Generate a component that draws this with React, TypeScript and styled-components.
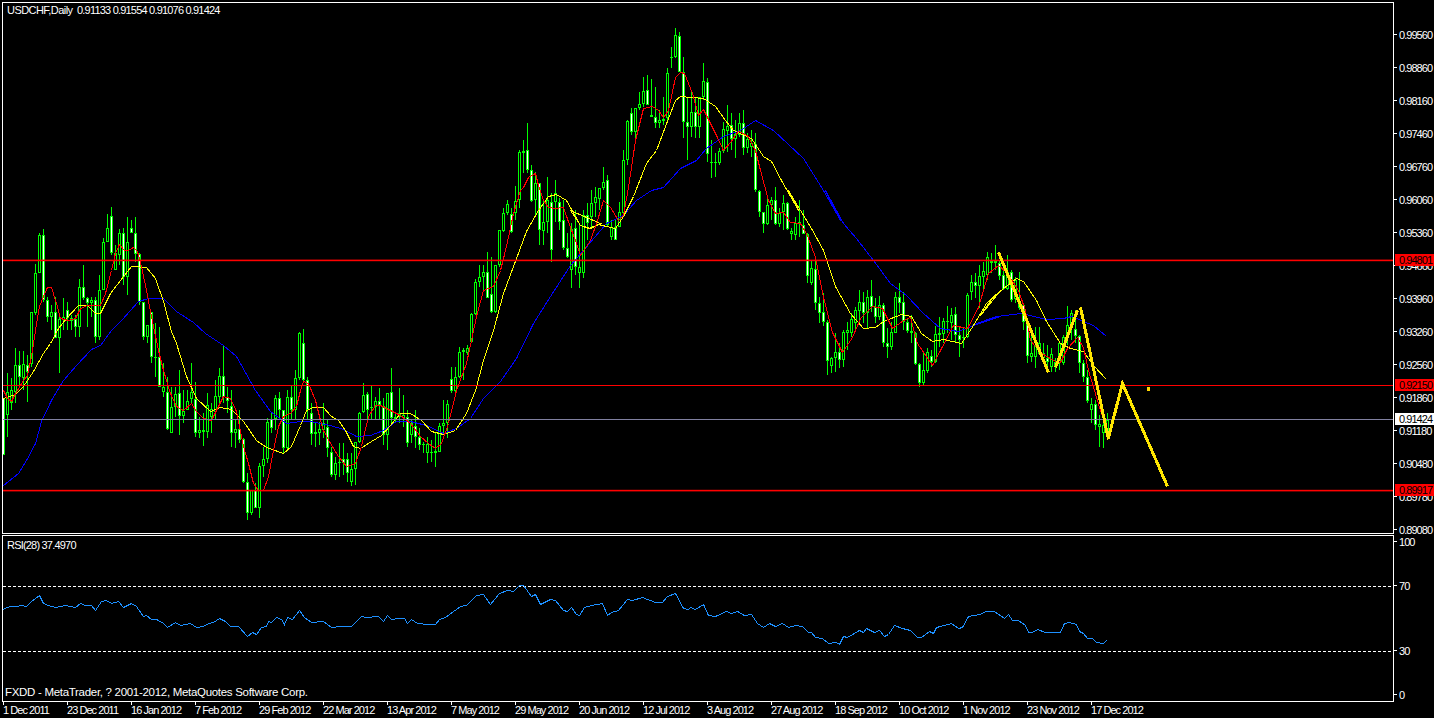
import * as React from 'react';
import styled, { createGlobalStyle } from 'styled-components';

type Bar = [number, number, number, number, number];
type Pt = [number, number];

// bars traced off 3x crops: [wick top, body top, body bottom, wick bottom, bull]
// values are crop y, so real y = base + v / 3
const barGroups: { base: number; rows: Bar[] }[] = [
  {
    base: 190,
    rows: [
      [625, 625, 795, 795, 0], [550, 605, 675, 740, 1], [565, 600, 640, 660, 1], [475, 525, 605, 640, 1],
      [483, 525, 560, 590, 0], [483, 522, 565, 600, 1], [495, 525, 545, 635, 0], [365, 367, 522, 530, 1],
      [222, 250, 370, 375, 1], [130, 135, 250, 250, 1], [118, 135, 330, 335, 0], [320, 330, 380, 395, 0],
      [345, 365, 380, 420, 1], [320, 365, 445, 445, 0], [370, 388, 445, 548, 1], [325, 380, 390, 420, 1],
      [335, 360, 385, 420, 0], [375, 385, 392, 420, 1], [375, 388, 412, 440, 0], [268, 290, 412, 440, 1],
      [225, 290, 325, 330, 0], [320, 325, 340, 410, 0], [320, 330, 340, 380, 1], [320, 330, 442, 460, 0],
      [255, 300, 442, 450, 1], [145, 155, 300, 300, 1], [72, 115, 155, 155, 1], [52, 78, 190, 195, 0],
      [165, 190, 240, 240, 1], [118, 130, 195, 225, 1], [115, 130, 262, 285, 0], [80, 155, 262, 315, 1],
      [90, 115, 128, 130, 0], [80, 128, 192, 215, 0], [190, 192, 335, 345, 0], [335, 335, 440, 450, 0],
      [405, 405, 440, 458, 1], [365, 365, 500, 520, 0], [400, 500, 505, 560, 1], [410, 500, 590, 590, 0],
      [520, 590, 605, 620, 1], [560, 605, 718, 720, 0], [590, 652, 728, 730, 1], [590, 612, 652, 680, 1],
      [540, 610, 678, 735, 0], [600, 662, 678, 700, 1], [600, 632, 660, 660, 1], [520, 605, 628, 640, 1],
      [575, 628, 728, 740, 0], [680, 720, 728, 745, 1], [670, 720, 725, 768, 1], [610, 645, 725, 745, 1],
      [640, 658, 682, 730, 1], [570, 618, 665, 690, 1], [535, 558, 620, 645, 1], [468, 558, 620, 640, 0],
      [590, 620, 632, 670, 0], [600, 648, 728, 770, 0], [690, 718, 728, 775, 1], [660, 718, 750, 760, 0],
      [745, 748, 875, 880, 0], [850, 875, 968, 990, 0], [900, 900, 968, 975, 1], [880, 900, 955, 955, 0],
      [820, 828, 955, 985, 1], [770, 808, 828, 860, 1], [685, 697, 808, 820, 1], [670, 688, 715, 730, 0],
      [615, 625, 688, 720, 1], [605, 625, 660, 690, 0], [660, 660, 775, 790, 0], [600, 620, 775, 782, 1],
      [585, 620, 660, 690, 0], [540, 565, 660, 690, 1], [425, 430, 565, 570, 1],
      // next crop starts here
      [418, 460, 570, 580, 0], [560, 570, 660, 690, 0], [640, 670, 732, 765, 0], [700, 725, 732, 770, 1],
      [695, 718, 728, 765, 1], [640, 700, 720, 745, 1], [690, 712, 775, 800, 0], [770, 785, 855, 860, 0],
      [800, 818, 855, 870, 1], [760, 815, 820, 860, 1], [760, 808, 820, 855, 0], [790, 808, 850, 875, 0],
      [790, 838, 875, 888, 1], [755, 755, 838, 885, 1], [665, 668, 755, 760, 1], [578, 615, 665, 668, 1],
      [605, 612, 660, 690, 0], [585, 650, 655, 690, 1], [620, 632, 650, 690, 1], [595, 632, 645, 690, 0],
      [625, 648, 735, 765, 0], [630, 610, 735, 780, 1], [535, 607, 685, 700, 0], [665, 680, 688, 700, 1],
      [595, 668, 680, 700, 1], [615, 675, 685, 710, 1], [660, 680, 760, 770, 0], [690, 700, 735, 760, 1],
      [660, 708, 742, 775, 0], [715, 742, 765, 780, 0], [755, 762, 765, 790, 1], [740, 762, 788, 818, 1],
      [750, 785, 788, 815, 1], [730, 782, 788, 832, 1], [700, 707, 785, 785, 1], [630, 700, 707, 735, 1],
      [630, 642, 700, 745, 1], [530, 568, 602, 610, 0], [530, 560, 602, 610, 1], [470, 485, 560, 565, 1],
      [475, 480, 487, 570, 1], [465, 475, 488, 495, 1], [370, 372, 455, 460, 1], [268, 277, 372, 375, 1],
      [225, 262, 277, 290, 1], [225, 245, 262, 300, 1], [185, 245, 325, 325, 0], [200, 312, 365, 370, 0],
      [225, 225, 365, 370, 1], [120, 120, 225, 230, 1], [55, 70, 122, 125, 1], [30, 42, 68, 75, 1],
      [55, 72, 125, 130, 0],
      // top of this stretch is cut from another crop, hence the negatives
      [-12, 33, 70, 90, 1], [-120, -114, 30, 54, 1], [-150, -117, -111, -51, 1], [-201, -120, -60, -51, 0],
      [-75, -60, 33, 36, 0], [-54, -21, 30, 75, 1], [-21, -21, 120, 165, 0], [30, 95, 122, 165, 1],
      [-39, 30, 95, 130, 1], [9, 35, 180, 215, 0], [-30, 10, 35, 95, 1], [25, 35, 95, 120, 0],
      [30, 90, 175, 180, 0], [130, 175, 200, 205, 0], [100, 118, 240, 295, 1], [60, 115, 230, 255, 0],
      [100, 230, 250, 295, 1], [60, 75, 250, 265, 1], [40, 75, 100, 150, 0], [0, 38, 82, 110, 1],
      [-10, 20, 38, 80, 1],
    ],
  },
  {
    base: 20,
    rows: [
      [505, 505, 538, 570, 1], [440, 485, 505, 510, 1], [465, 480, 615, 620, 0], [600, 620, 650, 660, 1],
      [600, 620, 660, 660, 0], [545, 575, 620, 620, 1], [390, 420, 578, 580, 1], [300, 302, 420, 435, 1],
      [265, 278, 335, 345, 0], [265, 265, 335, 360, 1], [215, 252, 265, 270, 1], [170, 212, 252, 260, 1],
      [165, 210, 255, 255, 0], [178, 285, 290, 290, 1], [200, 290, 310, 325, 0], [270, 300, 310, 325, 1],
      [230, 298, 302, 315, 1], [145, 158, 295, 300, 1], [80, 112, 115, 145, 1], [25, 45, 112, 115, 1],
      [35, 48, 155, 155, 0], [110, 155, 305, 355, 0], [230, 305, 320, 420, 0], [210, 275, 320, 350, 1],
      [230, 275, 322, 355, 0], [230, 232, 322, 355, 1], [130, 182, 232, 240, 1], [175, 185, 402, 425, 0],
      [360, 425, 428, 475, 1], [400, 425, 430, 470, 1], [385, 392, 428, 435, 1], [305, 328, 392, 400, 1],
      [255, 318, 332, 395, 1], [280, 315, 358, 390, 0], [300, 342, 358, 415, 1], [280, 310, 345, 350, 1],
      [270, 310, 385, 405, 0], [340, 358, 385, 400, 1], [330, 370, 382, 410, 1], [340, 372, 510, 515, 0],
      [510, 512, 575, 590, 0], [575, 575, 612, 640, 0], [530, 555, 612, 615, 1], [530, 540, 555, 600, 1],
      [500, 540, 612, 615, 0], [565, 578, 612, 620, 1], [525, 550, 575, 630, 1], [545, 550, 628, 630, 0],
      [625, 632, 642, 660, 1], [590, 610, 645, 660, 1], [540, 605, 612, 650, 1], [570, 615, 642, 640, 0],
    ],
  },
  {
    base: 190,
    rows: [
      [130, 132, 258, 280, 0], [210, 235, 280, 285, 1], [210, 237, 340, 360, 0], [320, 340, 368, 400, 0],
      [308, 365, 395, 408, 0], [390, 395, 512, 555, 0], [500, 505, 527, 548, 1], [430, 487, 505, 545, 1],
      [460, 487, 510, 535, 0], [420, 425, 510, 530, 1], [395, 420, 430, 480, 1], [370, 388, 430, 440, 1],
      [350, 360, 400, 420, 1], [300, 335, 362, 400, 1], [305, 335, 368, 400, 0], [300, 320, 368, 415, 1],
      [270, 318, 350, 365, 0], [325, 350, 380, 400, 0], [318, 345, 382, 390, 1], [340, 345, 460, 470, 0],
      [415, 460, 472, 505, 0], [395, 425, 470, 480, 1], [305, 322, 428, 430, 1], [280, 322, 338, 370, 0],
      [305, 335, 395, 420, 0], [385, 397, 422, 430, 0], [375, 422, 428, 460, 1], [425, 428, 522, 525, 0],
      [520, 522, 578, 590, 0], [490, 540, 578, 585, 1], [475, 487, 542, 550, 1], [480, 497, 515, 530, 0],
      [408, 432, 515, 520, 1], [380, 430, 435, 470, 1], [385, 393, 432, 460, 1], [347, 394, 395, 430, 1],
      [355, 375, 400, 450, 1], [350, 373, 435, 460, 0], [408, 435, 450, 500, 0],
    ],
  },
  {
    base: 230,
    rows: [
      [290, 320, 325, 355, 1], [190, 195, 320, 325, 1], [135, 155, 185, 210, 1], [130, 157, 167, 205, 0],
      [105, 138, 168, 235, 1], [95, 123, 140, 185, 1], [65, 82, 135, 150, 1], [70, 92, 98, 130, 1],
      [45, 92, 100, 120, 0], [90, 100, 137, 150, 0], [100, 135, 178, 180, 0], [75, 125, 178, 180, 1],
      [120, 125, 210, 215, 0], [140, 150, 208, 220, 1], [125, 220, 235, 240, 1], [220, 225, 275, 300, 0],
      [275, 275, 378, 400, 0], [300, 370, 380, 395, 1], [290, 345, 380, 415, 1], [290, 340, 372, 375, 1],
      [340, 370, 385, 400, 1], [345, 385, 395, 420, 0], [355, 372, 410, 425, 1], [385, 395, 410, 425, 0],
      [340, 340, 400, 420, 1], [315, 320, 400, 405, 1], [228, 285, 325, 345, 1], [240, 250, 290, 330, 1],
      [240, 298, 318, 340, 0], [315, 318, 400, 430, 0], [390, 400, 440, 455, 0], [420, 440, 512, 520, 0],
      [505, 522, 540, 580, 1], [510, 523, 585, 600, 0], [555, 582, 590, 650, 1], [565, 585, 610, 655, 1],
      [550, 570, 605, 620, 1],
    ],
  },
];

const bars = barGroups.flatMap((g) =>
  g.rows.map(([wt, bt, bb, wb, bull]) => ({
    wt: Math.round(g.base + wt / 3),
    bt: Math.round(g.base + bt / 3),
    bb: Math.round(g.base + bb / 3),
    wb: Math.round(g.base + wb / 3),
    bull: bull === 1,
  }))
);

// crop coords -> page coords
const crop = (ox: number, oy: number, pts: Pt[], sx = 3, sy = 3): Pt[] =>
  pts.map(([x, y]) => [ox + x / sx, oy + y / sy] as Pt);

const toPath = (pts: Pt[]) => pts.map(([x, y]) => `${Math.floor(x) + 0.5},${Math.floor(y) + 0.5}`).join(' ');

const redMa: Pt[] = [
  ...crop(0, 190, [[10, 600], [22, 625], [35, 635], [46, 610], [70, 570], [82, 555], [95, 500], [107, 420], [118, 350], [130, 320], [142, 293], [155, 293], [170, 340], [180, 385], [205, 392], [225, 385], [240, 355], [262, 345], [285, 345], [300, 345], [315, 310], [335, 240], [345, 190], [358, 162], [372, 182], [385, 182], [400, 172], [412, 185], [425, 230], [440, 300], [455, 380], [475, 480], [490, 540], [510, 610], [530, 650], [550, 662], [575, 640], [590, 665], [610, 685], [635, 690], [650, 660], [670, 620], [690, 625], [710, 665], [730, 770], [745, 820], [760, 880], [775, 900], [790, 900], [805, 860], [820, 780], [835, 710], [850, 680], [870, 670], [890, 650]]),
  ...crop(300, 190, [[0, 600], [10, 575], [25, 580], [45, 630], [60, 690], [70, 720], [90, 760], [115, 800], [140, 830], [165, 820], [185, 770], [205, 680], [225, 645], [240, 645], [265, 658], [300, 675], [330, 700], [360, 740], [385, 760], [405, 775], [425, 760], [445, 700], [470, 600], [500, 520], [515, 450], [530, 380], [550, 300], [580, 290], [600, 240], [620, 170], [640, 70], [660, 0]]),
  [523, 187], [528, 177], [535, 173], [538, 185], [543, 200], [548, 207], [555, 208], [563, 207], [570, 227], [575, 240], [580, 255], [590, 240], [597, 220], [603, 200], [610, 207], [618, 220], [623, 215], [628, 187], [635, 140], [643, 108], [652, 106], [658, 110], [663, 117], [668, 110], [675, 77], [680, 72], [684, 73], [692, 93], [698, 115], [703, 109], [710, 123], [717, 137], [723, 150], [730, 142], [738, 131], [747, 135], [755, 150], [760, 170], [768, 200], [775, 213], [783, 212], [790, 222], [800, 223], [807, 235], [815, 257], [823, 297], [832, 332], [842, 352], [852, 337], [860, 318], [872, 306], [882, 308], [892, 328], [903, 320], [910, 317], [917, 343], [932, 365], [940, 350], [953, 325], [967, 328], [978, 307], [988, 273], [998, 265], [1007, 273], [1018, 290], [1025, 310], [1030, 340], [1040, 352], [1053, 360], [1060, 362], [1067, 348], [1077, 337], [1083, 347], [1088, 370], [1100, 410], [1107, 430],
];

const yellowMa: Pt[] = [
  ...crop(0, 190, [[10, 625], [45, 612], [70, 590], [100, 545], [130, 490], [150, 460], [175, 415], [200, 385], [235, 345], [262, 345], [285, 370], [300, 370], [330, 310], [360, 270], [395, 230], [440, 232], [465, 265], [490, 335], [515, 425], [530, 460], [560, 560], [590, 625], [630, 665], [660, 652], [695, 658], [730, 695], [770, 750], [800, 772], [850, 790], [875, 770]]),
  ...crop(300, 190, [[0, 705], [20, 660], [40, 652], [70, 652], [95, 680], [115, 690], [135, 720], [160, 770], [180, 775], [215, 755], [245, 735], [270, 705], [300, 670], [330, 670], [365, 690], [395, 725], [430, 733], [465, 720], [500, 670], [525, 600], [550, 510], [580, 420], [610, 310], [650, 205], [680, 125], [715, 60], [745, 20], [770, 13], [800, 30], [840, 105], [870, 115], [900, 100]]),
  ...crop(560, 20, [[30, 570], [60, 615], [85, 625], [115, 612], [140, 620], [165, 625], [190, 590], [220, 530], [260, 430], [290, 390], [315, 320], [345, 240], [360, 230], [395, 232], [430, 235], [465, 260], [495, 300], [520, 330], [575, 355], [610, 410], [635, 425], [665, 480], [715, 570]]),
  ...crop(740, 190, [[145, 0], [180, 60], [215, 115], [250, 180], [285, 290], [330, 370], [370, 415], [405, 412], [430, 395], [485, 373], [515, 380], [545, 430], [578, 455], [610, 448], [665, 460], [700, 405], [740, 340], [780, 300]]),
  ...crop(960, 230, [[60, 255], [95, 208], [130, 175], [170, 145], [190, 155], [230, 210], [260, 275], [300, 340], [330, 355], [370, 365], [400, 405], [440, 448]]),
];

const blueMa: Pt[] = [
  ...crop(0, 190, [[10, 885], [55, 850], [80, 810], [105, 760], [125, 695], [155, 630], [190, 570], [230, 525], [275, 478], [300, 465], [335, 420], [365, 390], [415, 335], [445, 325], [490, 325], [530, 365], [580, 397], [615, 430], [670, 467], [710, 500], [765, 600], [810, 665], [860, 700]]),
  ...crop(300, 190, [[0, 695], [30, 695], [90, 705], [130, 718], [170, 740], [210, 735], [250, 720], [290, 695], [330, 695], [380, 705], [430, 730], [470, 715], [510, 685], [550, 625], [600, 575], [650, 505], [700, 400], [750, 320], [810, 225], [850, 180], [900, 120]]),
  ...crop(560, 20, [[140, 610], [190, 585], [230, 540], [275, 510], [310, 502], [360, 445], [410, 420], [440, 385], [490, 350], [540, 330], [585, 300], [640, 330], [730, 415], [790, 510], [840, 600]]),
  ...crop(740, 190, [[255, 0], [310, 100], [350, 145], [400, 210], [450, 280], [500, 315], [550, 370], [600, 415], [655, 425], [700, 405], [780, 378]]),
  ...crop(960, 230, [[50, 280], [110, 260], [185, 250], [260, 268], [310, 265], [335, 258], [400, 285], [440, 320]]),
];

const rsiLine: Pt[] = [
  ...crop(0, 520, [[10, 268], [20, 262], [35, 260], [50, 258], [65, 257], [80, 258], [95, 243], [118, 227], [130, 250], [145, 255], [165, 262], [195, 257], [225, 262], [240, 250], [255, 255], [275, 256], [285, 270], [305, 245], [320, 240], [335, 250], [355, 243], [370, 262], [395, 250], [410, 260], [430, 288], [440, 285], [455, 297], [470, 298], [490, 310], [502, 322], [525, 307], [540, 316], [570, 310], [590, 322], [610, 320], [625, 310], [640, 308], [658, 296], [675, 305], [692, 320], [715, 320], [742, 350], [758, 337], [768, 343], [785, 322], [800, 318], [805, 305], [815, 307], [828, 291], [845, 298], [852, 313], [862, 293], [877, 297], [898, 272], [912, 293], [935, 307], [970, 305], [995, 322], [1025, 318], [1040, 320], [1055, 320], [1085, 288], [1100, 292], [1135, 290], [1150, 305], [1162, 285], [1175, 297], [1198, 295]]),
  ...crop(400, 530, [[0, 265], [8, 265], [15, 280], [22, 268], [35, 280], [55, 284], [70, 284], [78, 268], [90, 262], [118, 230], [130, 227], [150, 197], [163, 192], [178, 222], [195, 190], [210, 182], [222, 185], [235, 165], [242, 165], [258, 198], [265, 192], [275, 223], [295, 207], [305, 212], [320, 240], [328, 243], [336, 232], [345, 253], [352, 257], [362, 232], [375, 227], [397, 220], [407, 257], [415, 248], [428, 242], [445, 208], [455, 212], [475, 202], [500, 218], [515, 217], [525, 198], [540, 190], [555, 235], [565, 237], [570, 232], [580, 237], [595, 222], [605, 257], [618, 260], [640, 243], [650, 250], [662, 245], [675, 257], [688, 254], [700, 280], [712, 292], [725, 281], [735, 288], [750, 280], [762, 293], [775, 287], [788, 290], [800, 308], [806, 307], [815, 322], [828, 326], [840, 340], [855, 338], [862, 342], [870, 320], [878, 322], [900, 300], [908, 306], [915, 296], [930, 308], [940, 302], [950, 320], [958, 312], [970, 285], [985, 295], [1000, 300], [1015, 323], [1022, 322], [1038, 305], [1045, 310], [1052, 293], [1060, 290], [1080, 280], [1095, 295], [1102, 293], [1115, 258], [1135, 252], [1150, 245], [1165, 245], [1185, 265], [1192, 254], [1200, 272], [1212, 272], [1225, 285], [1232, 307], [1240, 307], [1250, 298], [1265, 307], [1295, 307], [1302, 280], [1312, 277], [1325, 283], [1332, 304], [1340, 310], [1348, 325], [1358, 326], [1365, 338], [1378, 340], [1385, 330]], 1.96, 3),
];

const trendLines: Pt[][] = [
  [[998, 252], [1048, 372]],
  [[1055, 367], [1077, 310]],
  [[1080, 307], [1108, 439]],
  [[1108, 437], [1122, 383], [1167, 486]],
];

const priceTicks = ['0.99560', '0.98860', '0.98160', '0.97460', '0.96760', '0.96060', '0.95360', '0.94660', '0.93960', '0.93260', '0.92560', '0.91860', '0.91180', '0.90480', '0.89780', '0.89080'];

const dates = ['1 Dec 2011', '23 Dec 2011', '16 Jan 2012', '7 Feb 2012', '29 Feb 2012', '22 Mar 2012', '13 Apr 2012', '7 May 2012', '29 May 2012', '20 Jun 2012', '12 Jul 2012', '3 Aug 2012', '27 Aug 2012', '18 Sep 2012', '10 Oct 2012', '1 Nov 2012', '23 Nov 2012', '17 Dec 2012'];

const GlobalStyle = createGlobalStyle`
  html, body {
    margin: 0;
    background: #000;
    overflow: hidden;
  }
`;

const Terminal = styled.div`
  width: 1434px;
  height: 718px;
  padding: 2px 0 0 2px;
  box-sizing: border-box;
  background: #000;
  color: #fff;
  font-family: 'Liberation Sans', Arial, sans-serif;
  font-size: 11px;
  letter-spacing: -0.95px;
  display: flex;
  flex-direction: column;
  overflow: hidden;
`;

const PaneRow = styled.div<{ $height: number; $spaced?: boolean }>`
  display: flex;
  height: ${(p) => p.$height}px;
  margin-bottom: ${(p) => (p.$spaced ? '1px' : '0')};
  flex: none;
`;

const Pane = styled.div`
  position: relative;
  width: 1392px;
  box-sizing: border-box;
  border: 1px solid #fff;
  flex: none;
`;

const PlotSvg = styled.svg`
  display: block;
  width: 100%;
  height: 100%;
  shape-rendering: crispEdges;
`;

const PaneCaption = styled.div<{ $top: number }>`
  position: absolute;
  left: 4px;
  top: ${(p) => p.$top}px;
  white-space: pre;
  line-height: 13px;
  letter-spacing: -0.8px;
`;

const CaptionName = styled.span`
  letter-spacing: -0.55px;
`;

const CopyrightNote = styled.div`
  position: absolute;
  left: 2px;
  bottom: 2px;
  white-space: pre;
  line-height: 13px;
  font-size: 11.5px;
  letter-spacing: -0.3px;
`;

const PriceAxis = styled.div`
  position: relative;
  flex: 1;
  padding-top: 16px;
`;

const AxisTick = styled.div`
  display: flex;
  align-items: center;
  gap: 2px;
  &::before {
    content: '';
    width: 3px;
    height: 1px;
    background: #fff;
  }
`;

const PriceTick = styled(AxisTick)`
  height: 33px;
`;

const PriceTag = styled.div<{ $y: number; $tone: 'red' | 'white' }>`
  position: absolute;
  left: 1px;
  right: 0;
  top: ${(p) => p.$y - 8}px;
  height: 12px;
  line-height: 12px;
  padding-left: 4px;
  color: #000;
  background: ${(p) => (p.$tone === 'red' ? '#ff0000' : '#ffffff')};
`;

const LevelAxis = styled.div`
  flex: 1;
  display: grid;
  grid-template-rows: 44px 65px 44px 13px;
`;

const LevelTick = styled(AxisTick)`
  height: 13px;
`;

const TimeAxis = styled.div`
  display: grid;
  grid-template-columns: repeat(18, 64px);
  padding-left: 1px;
`;

const TimeTick = styled.div`
  white-space: nowrap;
  line-height: 11px;
  &::before {
    content: '';
    display: block;
    width: 1px;
    height: 3px;
    background: #fff;
  }
`;

const App = () => {
  return (
    <Terminal>
      <GlobalStyle />
      <PaneRow $height={532} $spaced>
        <Pane>
          <PlotSvg viewBox="3 3 1390 530">
            {bars.map((b, i) => {
              const x = 3 + 4 * i;
              const h = b.bb - b.bt;
              return (
                <g key={i}>
                  <rect x={x} y={b.wt} width={1} height={Math.max(1, b.wb - b.wt)} fill="#00ff00" />
                  <rect x={x - 1} y={b.bt} width={3} height={Math.max(1, h)} fill="#00ff00" />
                  {h > 2 && <rect x={x} y={b.bt + 1} width={1} height={h - 2} fill={b.bull ? '#000' : '#fff'} />}
                </g>
              );
            })}
            <polyline points={toPath(blueMa)} fill="none" stroke="#0000ff" strokeWidth={1} />
            <polyline points={toPath(yellowMa)} fill="none" stroke="#ffff00" strokeWidth={1} />
            <polyline points={toPath(redMa)} fill="none" stroke="#ff0000" strokeWidth={1} />
            <rect x={3} y={259.6} width={1390} height={1.6} fill="#ff0000" shapeRendering="geometricPrecision" />
            <rect x={3} y={385} width={1390} height={1} fill="#ff0000" />
            <rect x={3} y={419} width={1390} height={1} fill="#8080a0" />
            <rect x={3} y={489.8} width={1390} height={1.6} fill="#ff0000" shapeRendering="geometricPrecision" />
            {trendLines.map((line, i) => (
              <polyline key={i} points={toPath(line)} fill="none" stroke="#ffe600" strokeWidth={3} />
            ))}
            <rect x={1147} y={387} width={3} height={4} fill="#ffd700" />
          </PlotSvg>
          <PaneCaption $top={1}>
            <CaptionName>USDCHF,Daily</CaptionName>
            {'  0.91133 0.91554 0.91076 0.91424'}
          </PaneCaption>
        </Pane>
        <PriceAxis>
          {priceTicks.map((p) => (
            <PriceTick key={p}>{p}</PriceTick>
          ))}
          <PriceTag $y={260} $tone="red">0.94801</PriceTag>
          <PriceTag $y={385} $tone="red">0.92150</PriceTag>
          <PriceTag $y={419} $tone="white">0.91424</PriceTag>
          <PriceTag $y={490} $tone="red">0.89917</PriceTag>
        </PriceAxis>
      </PaneRow>
      <PaneRow $height={167}>
        <Pane>
          <PlotSvg viewBox="3 536 1390 165">
            <line x1={3} y1={586.5} x2={1393} y2={586.5} stroke="#fff" strokeDasharray="3 2" />
            <line x1={3} y1={651.5} x2={1393} y2={651.5} stroke="#fff" strokeDasharray="3 2" />
            <polyline points={toPath(rsiLine)} fill="none" stroke="#1e90ff" strokeWidth={1} />
          </PlotSvg>
          <PaneCaption $top={3}>RSI(28) 37.4970</PaneCaption>
          <CopyrightNote>FXDD - MetaTrader, ? 2001-2012, MetaQuotes Software Corp.</CopyrightNote>
        </Pane>
        <LevelAxis>
          <LevelTick>100</LevelTick>
          <LevelTick>70</LevelTick>
          <LevelTick>30</LevelTick>
          <LevelTick>0</LevelTick>
        </LevelAxis>
      </PaneRow>
      <TimeAxis>
        {dates.map((d) => (
          <TimeTick key={d}>{d}</TimeTick>
        ))}
      </TimeAxis>
    </Terminal>
  );
};

export default App;
